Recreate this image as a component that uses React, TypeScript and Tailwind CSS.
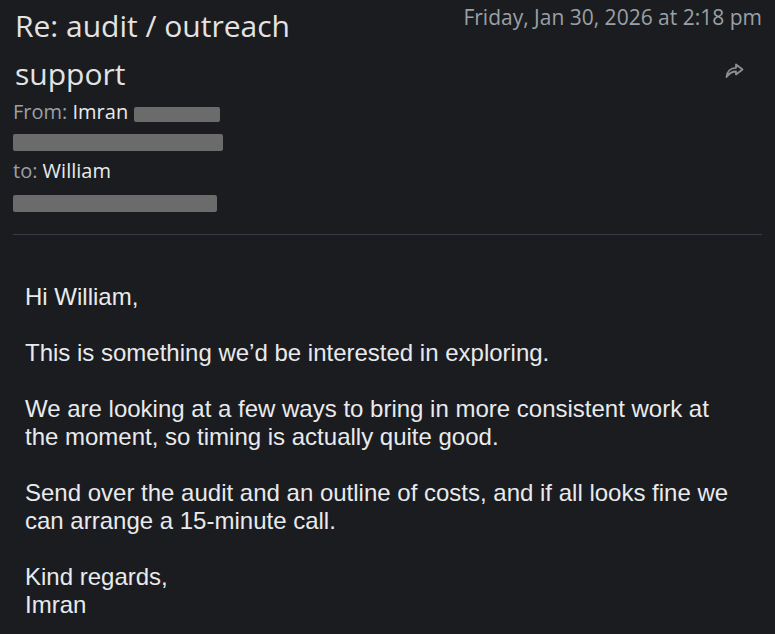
export default function App() {
  return (
    <div className="w-[775px] h-[634px] overflow-hidden bg-[#1b1c1f] font-['Open_Sans',sans-serif]">
      <div className="px-[13px]">
        <div className="flex justify-between">
          <h1 className="w-[340px] pt-[2px] pl-[2px] text-[30px] leading-[48px] font-medium text-[#e3e3e3]">
            Re: audit / outreach support
          </h1>
          <div className="flex flex-col items-end pt-[5px]">
            <p className="text-[21px] leading-[24px] text-[#9aa0a6]">Friday, Jan 30, 2026 at 2:18 pm</p>
            <button className="block mt-[34px] mr-[18px] text-[#8f8f8f]">
              <svg className="block" width="20" height="16" viewBox="0 0 20 16" fill="none" stroke="currentColor" strokeWidth="1.8" strokeLinejoin="round">
                <path d="M12 1.5 L18.5 6.5 L12 11.5 V8.5 C7.5 8.5 5 10.5 2.5 14 C3 8.5 6.5 4.8 12 4.8 Z" />
              </svg>
            </button>
          </div>
        </div>

        <div className="mt-[2px] text-[20px] leading-[24px]">
          <div className="flex items-start gap-[6px]">
            <span>
              <span className="text-[#9aa0a6]">From: </span>
              <span className="text-[#e8eaed]">Imran</span>
            </span>
            <span className="inline-block w-[86px] h-[15px] rounded-[2px] bg-[#6b6b6b] mt-[7px]" />
          </div>
          <div className="mt-[10px] w-[210px] h-[17px] rounded-[2px] bg-[#6b6b6b]" />
          <div className="mt-[8px]">
            <span className="text-[#9aa0a6]">to: </span>
            <span className="text-[#e8eaed]">William</span>
          </div>
          <div className="mt-[12px] w-[204px] h-[17px] rounded-[2px] bg-[#6b6b6b]" />
        </div>

        <div className="mt-[22px] h-px bg-[#3a3b4a]" />
      </div>

      <div className="pl-[25px] pr-[35px] pt-[48px] font-['Liberation_Sans',Arial,sans-serif] text-[24px] leading-[28px] text-[#e8eaed]">
        <p>Hi William,</p>
        <p className="mt-[28px]">This is something we’d be interested in exploring.</p>
        <p className="mt-[28px]">
          We are looking at a few ways to bring in more consistent work at the moment, so timing is actually quite good.
        </p>
        <p className="mt-[28px]">
          Send over the audit and an outline of costs, and if all looks fine we can arrange a 15-minute call.
        </p>
        <p className="mt-[28px]">
          Kind regards,
          <br />
          Imran
        </p>
      </div>
    </div>
  );
}
